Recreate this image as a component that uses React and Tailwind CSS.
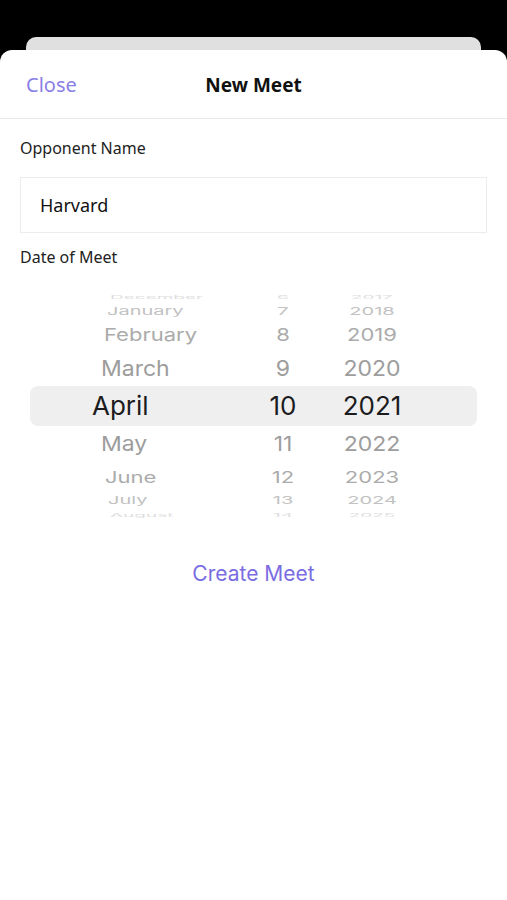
import React from "react";

const rows = [
  { m: "December", d: "6", y: "2017", h: "h-[12px]", pl: "pl-[110px]", size: "text-[19px]", sy: "scale-y-[0.25]", color: "text-[#dedede]", pt: "pt-[6px]" },
  { m: "January", d: "7", y: "2018", h: "h-[20px]", pl: "pl-[107px]", size: "text-[20px]", sy: "scale-y-[0.55]", color: "text-[#c2c2c2]", pt: "" },
  { m: "February", d: "8", y: "2019", h: "h-[28px]", pl: "pl-[104px]", size: "text-[22px]", sy: "scale-y-[0.8]", color: "text-[#ababab]", pt: "" },
  { m: "March", d: "9", y: "2020", h: "h-[37px]", pl: "pl-[101px]", size: "text-[23px]", sy: "scale-y-[0.92]", color: "text-[#9d9d9d]", pt: "pt-[3px]" },
  { sel: true, m: "April", d: "10", y: "2021" },
  { m: "May", d: "11", y: "2022", h: "h-[36px]", pl: "pl-[101px]", size: "text-[23px]", sy: "scale-y-[0.9]", color: "text-[#9d9d9d]", pt: "" },
  { m: "June", d: "12", y: "2023", h: "h-[29px]", pl: "pl-[105px]", size: "text-[22px]", sy: "scale-y-[0.75]", color: "text-[#ababab]", pt: "" },
  { m: "July", d: "13", y: "2024", h: "h-[18px]", pl: "pl-[108px]", size: "text-[20px]", sy: "scale-y-[0.55]", color: "text-[#c2c2c2]", pt: "" },
  { m: "August", d: "14", y: "2025", h: "h-[10px]", pl: "pl-[110px]", size: "text-[19px]", sy: "scale-y-[0.25]", color: "text-[#dedede]", pt: "pb-[6px]" },
];

function PickerRow({ r }) {
  if (r.sel) {
    return (
      <div className="mx-[30px] h-[40px] rounded-lg bg-[#efeff0] grid grid-cols-[220px_66px_112px] items-center text-[26px] text-[#1c1c1e] leading-none">
        <span className="pl-[62px]">{r.m}</span>
        <span className="text-center">{r.d}</span>
        <span className="text-center">{r.y}</span>
      </div>
    );
  }
  return (
    <div className={`${r.h} overflow-hidden`}>
      <div
        className={`h-full grid grid-cols-[250px_66px_112px] items-center leading-none ${r.pt} ${r.size} ${r.color} transform ${r.sy}`}
      >
        <span className={r.pl}>{r.m}</span>
        <span className="text-center">{r.d}</span>
        <span className="text-center">{r.y}</span>
      </div>
    </div>
  );
}

export default function App() {
  return (
    <div className="h-[900px] bg-black flex flex-col pt-[37px] font-['Noto_Sans',sans-serif]">
      <div className="mx-[26px] h-[13px] rounded-t-[10px] bg-[#e0e0e0]" />
      <div className="flex-1 bg-white rounded-t-[12px] flex flex-col">
        <div className="relative h-[69px] pt-[2px] flex items-center border-b border-[#e8e8e8]">
          <button className="pl-[26px] text-[20px] text-[#8a7fe6]">Close</button>
          <h1 className="absolute left-0 right-0 text-center text-[19px] font-bold text-[#111] pointer-events-none">
            New Meet
          </h1>
        </div>

        <div className="px-[20px]">
          <div className="pt-[17px] text-[16px] leading-[24px] text-[#222]">Opponent Name</div>
          <div className="mt-[17px] h-[56px] border border-[#ececec] flex items-center pl-[19px] text-[18px] text-[#111]">
            Harvard
          </div>
          <div className="mt-[12px] text-[16px] leading-[24px] text-[#222]">Date of Meet</div>
        </div>

        <div className="mt-[20px] flex flex-col font-['Inter',sans-serif]">
          {rows.map((r) => (
            <PickerRow key={r.m} r={r} />
          ))}
        </div>

        <div className="mt-[41px] flex justify-center">
          <button className="text-[21px] leading-[28px] text-[#7a6de2] font-['Inter',sans-serif]">
            Create Meet
          </button>
        </div>
      </div>
    </div>
  );
}
